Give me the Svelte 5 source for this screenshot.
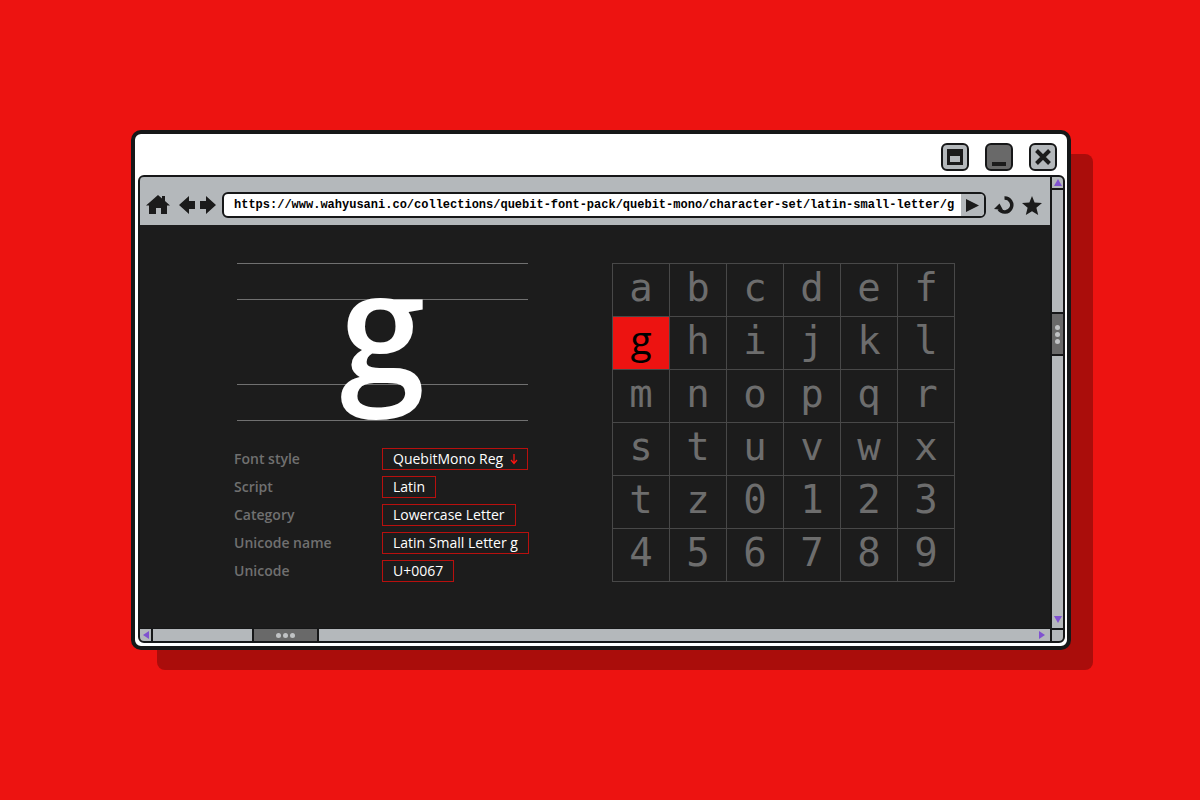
<script lang="ts">
  const characters = [...'abcdefghijklmnopqrstuvwxtz0123456789'].map((glyph, id) => ({ id, glyph }));

  const details = [
    { term: 'Script', value: 'Latin' },
    { term: 'Category', value: 'Lowercase Letter' },
    { term: 'Unicode name', value: 'Latin Small Letter g' },
    { term: 'Unicode', value: 'U+0067' },
  ];

  let selected = $state('g');
  let url = $state(
    'https://www.wahyusani.co/collections/quebit-font-pack/quebit-mono/character-set/latin-small-letter/g',
  );
</script>

<div class="desktop">
  <section class="window" aria-label="Browser">
    <header class="title-bar">
      <button class="window-button" aria-label="Maximize">
        <svg viewBox="0 0 24 24" width="24" height="24">
          <path fill="#1b1b1b" fill-rule="evenodd" d="M4 4h16v16H4z M7 11v6h10v-6z" />
        </svg>
      </button>
      <button class="window-button dark" aria-label="Minimize">
        <svg viewBox="0 0 24 24" width="24" height="24">
          <path fill="#1b1b1b" d="M5 17h14v4H5z" />
        </svg>
      </button>
      <button class="window-button" aria-label="Close">
        <svg viewBox="0 0 24 24" width="24" height="24">
          <path stroke="#1b1b1b" stroke-width="4" d="M5.500 5.500l13 13M18.500 5.500l-13 13" />
        </svg>
      </button>
    </header>

    <div class="frame">
      <div class="view">
        <nav class="toolbar" aria-label="Navigation">
          <button class="tool" aria-label="Home">
            <svg viewBox="0 0 24 20" width="24" height="20">
              <path d="M12 0l4 3.500V1h3v5l5 4.500h-3V19h-6v-6h-5v6H3v-8.500H0z" />
            </svg>
          </button>
          <button class="tool back" aria-label="Back">
            <svg viewBox="0 0 16 18" width="16" height="18">
              <path d="M0 9L10 0v5h6v8h-6v5z" />
            </svg>
          </button>
          <button class="tool forward" aria-label="Forward">
            <svg viewBox="0 0 16 18" width="16" height="18">
              <path d="M16 9L6 0v5H0v8h6v5z" />
            </svg>
          </button>
          <div class="address">
            <input type="text" aria-label="Address" spellcheck="false" bind:value={url} />
            <button class="go" aria-label="Go">
              <svg viewBox="0 0 13 13" width="13" height="13">
                <path d="M0 0l13 6.500L0 13z" />
              </svg>
            </button>
          </div>
          <button class="tool reload" aria-label="Reload">
            <svg viewBox="0 0 20 19" width="20" height="19">
              <path
                d="M10.500 2A7 7 0 1 1 5 13"
                fill="none"
                stroke="#1b1b1b"
                stroke-width="3.500"
              />
              <path d="M0 13L5.500 7.500L9 14z" />
            </svg>
          </button>
          <button class="tool star" aria-label="Bookmark">
            <svg viewBox="0 0 20 19" width="20" height="19">
              <path d="M10 0l2.600 6.500 7.400.6-5.600 4.700L16.200 19 10 15.200 3.800 19l1.800-7.200L0 7.100l7.400-.6z" />
            </svg>
          </button>
        </nav>

        <main class="content">
          <div class="info">
            <div class="specimen">
              <span class="band"></span>
              <span class="band x-height"></span>
              <span class="band last"></span>
              <span class="big-glyph">{selected}</span>
            </div>

            <dl class="details">
              <dt><label for="font-style">Font style</label></dt>
              <dd>
                <span class="select-wrap">
                  <select id="font-style" class="tag">
                    <option>QuebitMono Reg</option>
                  </select>
                  <svg class="down" viewBox="0 0 8 12" width="8" height="12" aria-hidden="true">
                    <path d="M4 1v9M1 7l3 3.500L7 7" fill="none" stroke="#ff1411" stroke-width="1.200" />
                  </svg>
                </span>
              </dd>
              {#each details as detail (detail.term)}
                <dt>{detail.term}</dt>
                <dd><span class="tag">{detail.value}</span></dd>
              {/each}
            </dl>
          </div>

          <div class="char-grid">
            {#each characters as { id, glyph } (id)}
              <button
                class="char"
                class:selected={glyph === selected}
                aria-pressed={glyph === selected}
                onclick={() => (selected = glyph)}
              >
                {glyph}
              </button>
            {/each}
          </div>
        </main>
      </div>

      <div class="scroll-y">
        <button class="arrow first" aria-label="Scroll up">
          <svg viewBox="0 0 8 7" width="8" height="7"><path d="M4 0l4 7H0z" /></svg>
        </button>
        <span></span>
        <span class="thumb">
          <i></i><i></i><i></i>
        </span>
        <span></span>
        <button class="arrow" aria-label="Scroll down">
          <svg viewBox="0 0 8 7" width="8" height="7"><path d="M4 7L0 0h8z" /></svg>
        </button>
      </div>

      <div class="scroll-x">
        <button class="arrow first" aria-label="Scroll left">
          <svg viewBox="0 0 6 8" width="6" height="8"><path d="M0 4l6-4v8z" /></svg>
        </button>
        <span></span>
        <span class="thumb">
          <i></i><i></i><i></i>
        </span>
        <span></span>
        <button class="arrow" aria-label="Scroll right">
          <svg viewBox="0 0 6 8" width="6" height="8"><path d="M6 4L0 8V0z" /></svg>
        </button>
      </div>

      <div class="corner"></div>
    </div>
  </section>
</div>

<style>
  :global(body) {
    background: #ed1311;
  }

  .desktop {
    --ink: #161718;
    --dark: #1c1c1c;
    --silver: #b4b8bb;
    --slate: #696969;
    --red: #ed1311;

    display: flex;
    box-sizing: border-box;
    min-height: 100vh;
    padding: 130px 129px 150px 131px;
    background: var(--red);
    font-family: 'Open Sans', sans-serif;
  }

  button {
    display: flex;
    align-items: center;
    justify-content: center;
    margin: 0;
    border: 0;
    background: none;
    padding: 0;
    font: inherit;
    cursor: pointer;
  }

  svg {
    display: block;
    flex: none;
  }

  .window {
    display: flex;
    flex: 1;
    flex-direction: column;
    box-sizing: border-box;
    min-width: 0;
    border: 4px solid var(--ink);
    border-radius: 10px;
    background: #fff;
    padding: 0 2px 3px 3px;
    box-shadow: 24px 22px 0 -2px #aa0d0b;
  }

  /* Title bar */
  .title-bar {
    display: flex;
    gap: 16px;
    justify-content: flex-end;
    padding: 9px 8px 4px;
  }

  .window-button {
    box-sizing: border-box;
    width: 28px;
    height: 28px;
    border: 2px solid var(--ink);
    border-radius: 6px;
    background: var(--silver);
  }

  .window-button.dark {
    background: var(--slate);
  }

  /* Frame with view and scrollbars */
  .frame {
    display: grid;
    flex: 1;
    grid-template-columns: minmax(0, 1fr) 13px;
    grid-template-rows: 1fr 13px;
    border: 2px solid var(--ink);
    border-radius: 6px;
    background: var(--silver);
    overflow: hidden;
  }

  .view {
    display: flex;
    flex-direction: column;
    background: var(--dark);
  }

  .toolbar {
    display: flex;
    align-items: center;
    background: var(--silver);
    padding: 15px 8px 7px 6px;
  }

  .tool {
    fill: #1b1b1b;
  }

  .back {
    margin-left: 9px;
  }

  .forward {
    margin: 0 6px 0 5px;
  }

  .reload,
  .star {
    margin-left: 8px;
  }

  .address {
    display: flex;
    flex: 1;
    box-sizing: border-box;
    height: 26px;
    min-width: 0;
    border: 2px solid var(--ink);
    border-radius: 6px;
    background: #fff;
    overflow: hidden;
  }

  .address input {
    flex: 1;
    min-width: 0;
    border: 0;
    outline: 0;
    background: none;
    color: #000;
    font: 600 12px 'Liberation Mono', monospace;
    padding: 0 0 0 10px;
  }

  .go {
    width: 23px;
    background: var(--silver);
    fill: #1b1b1b;
  }

  /* Page content */
  .content {
    display: flex;
    flex: 1;
    justify-content: space-between;
    gap: 40px;
    padding: 38px 95px 46px 94px;
  }

  .info {
    width: 297px;
  }

  .specimen {
    position: relative;
    display: flex;
    flex-direction: column;
    margin: 0 3px;
  }

  .band {
    height: 35px;
    border-top: 1px solid #707070;
  }

  .band.x-height {
    height: 84px;
  }

  .band.last {
    border-bottom: 1px solid #707070;
  }

  .big-glyph {
    position: absolute;
    inset: 0;
    color: #fff;
    font-size: 154px;
    font-weight: 600;
    line-height: 120px;
    text-align: center;
  }

  .details {
    display: grid;
    grid-template-columns: 148px 1fr;
    row-gap: 6px;
    margin: 27px 0 0;
    font-size: 14px;
    line-height: 20px;
  }

  .details dt {
    color: #707070;
    font-weight: 600;
    line-height: 22px;
  }

  .details dd {
    display: flex;
    margin: 0;
    white-space: nowrap;
  }

  .tag {
    box-sizing: border-box;
    height: 22px;
    border: 1px solid #b8100e;
    border-radius: 0;
    color: #fff;
    padding: 0 10px;
  }

  .select-wrap {
    position: relative;
    display: flex;
  }

  select.tag {
    appearance: none;
    width: 146px;
    background: none;
    font: inherit;
    outline: 0;
  }

  .down {
    position: absolute;
    top: 5px;
    right: 10px;
    pointer-events: none;
  }

  /* Character set */
  .char-grid {
    display: grid;
    align-self: flex-start;
    grid-template-columns: repeat(6, 56px);
    grid-auto-rows: 52px;
    gap: 1px;
    border: 1px solid #484848;
    background: #484848;
  }

  .char {
    background: var(--dark);
    color: #6d6d6d;
    padding-bottom: 4px;
    font-family: 'DejaVu Sans Mono', monospace;
    font-size: 39px;
    line-height: 48px;
  }

  .char.selected {
    background: var(--red);
    color: #000;
    padding-bottom: 8px;
    font-family: 'Open Sans', sans-serif;
  }

  /* Scrollbars */
  .scroll-y,
  .scroll-x {
    display: grid;
    box-sizing: border-box;
  }

  .scroll-y {
    grid-template-rows: 13px 123fr 44px 257fr 17px;
    border-left: 2px solid var(--ink);
  }

  .scroll-x {
    grid-template-columns: 13px 99fr 67px 712fr 17px;
    border-top: 1px solid var(--ink);
  }

  .arrow {
    fill: #8052d0;
  }

  .scroll-y .first {
    border-bottom: 2px solid var(--ink);
  }

  .scroll-x .first {
    border-right: 2px solid var(--ink);
  }

  .thumb {
    display: flex;
    gap: 2px;
    align-items: center;
    justify-content: center;
    background: var(--slate);
  }

  .scroll-y .thumb {
    flex-direction: column;
    border-top: 2px solid var(--ink);
    border-bottom: 2px solid var(--ink);
  }

  .scroll-x .thumb {
    border-right: 2px solid var(--ink);
    border-left: 2px solid var(--ink);
  }

  .thumb i {
    width: 5px;
    height: 5px;
    border-radius: 50%;
    background: #c0c2c4;
  }

  .corner {
    border-top: 2px solid var(--ink);
    border-left: 2px solid var(--ink);
  }
</style>
